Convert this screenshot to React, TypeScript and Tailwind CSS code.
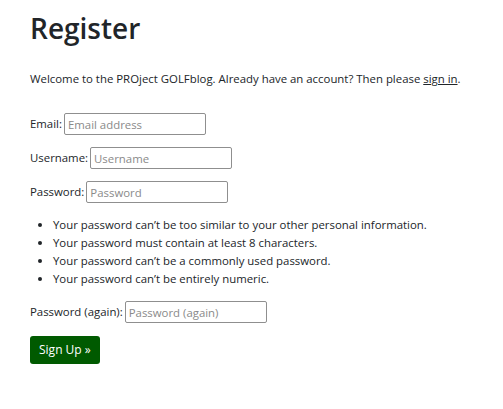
export default function App() {
  const rules = [
    "Your password can’t be too similar to your other personal information.",
    "Your password must contain at least 8 characters.",
    "Your password can’t be a commonly used password.",
    "Your password can’t be entirely numeric.",
  ];

  return (
    <div
      className="min-h-screen bg-white px-[30px] pt-[11px] text-[11.4px] leading-[18px] text-[#212529]"
      style={{ fontFamily: '"Open Sans", "Noto Sans", sans-serif' }}
    >
      <h1 className="text-[28px] font-semibold leading-[35px]">Register</h1>

      <p className="mt-[24px]">
        Welcome to the PROject GOLFblog. Already have an account? Then please{" "}
        <a href="#" className="underline">
          sign in
        </a>
        .
      </p>

      <form className="mt-[25px]">
        <p className="flex h-[22px] items-center">
          <label htmlFor="email">Email:</label>
          <input
            id="email"
            placeholder="Email address"
            className="ml-[2px] h-[22px] w-[142px] rounded-[2px] border border-[#8f8f8f] px-[3px] text-[11.4px] placeholder:text-[#8a8a8a]"
          />
        </p>

        <p className="mt-[12px] flex h-[22px] items-center">
          <label htmlFor="username">Username:</label>
          <input
            id="username"
            placeholder="Username"
            className="ml-[2px] h-[22px] w-[142px] rounded-[2px] border border-[#8f8f8f] px-[3px] text-[11.4px] placeholder:text-[#8a8a8a]"
          />
        </p>

        <p className="mt-[12px] flex h-[22px] items-center">
          <label htmlFor="password1">Password:</label>
          <input
            id="password1"
            type="password"
            placeholder="Password"
            className="ml-[2px] h-[22px] w-[142px] rounded-[2px] border border-[#8f8f8f] px-[3px] text-[11.4px] placeholder:text-[#8a8a8a]"
          />
        </p>

        <ul className="mt-[13px] list-disc pl-[23px]">
          {rules.map((r) => (
            <li key={r}>{r}</li>
          ))}
        </ul>

        <p className="mt-[13px] flex h-[22px] items-center">
          <label htmlFor="password2">Password (again):</label>
          <input
            id="password2"
            type="password"
            placeholder="Password (again)"
            className="ml-[2px] h-[22px] w-[142px] rounded-[2px] border border-[#8f8f8f] px-[3px] text-[11.4px] placeholder:text-[#8a8a8a]"
          />
        </p>

        <button
          type="submit"
          className="mt-[13px] h-[28px] rounded-[3px] bg-[#005a00] px-[9px] text-[12px] text-white"
        >
          Sign Up »
        </button>
      </form>
    </div>
  );
}
